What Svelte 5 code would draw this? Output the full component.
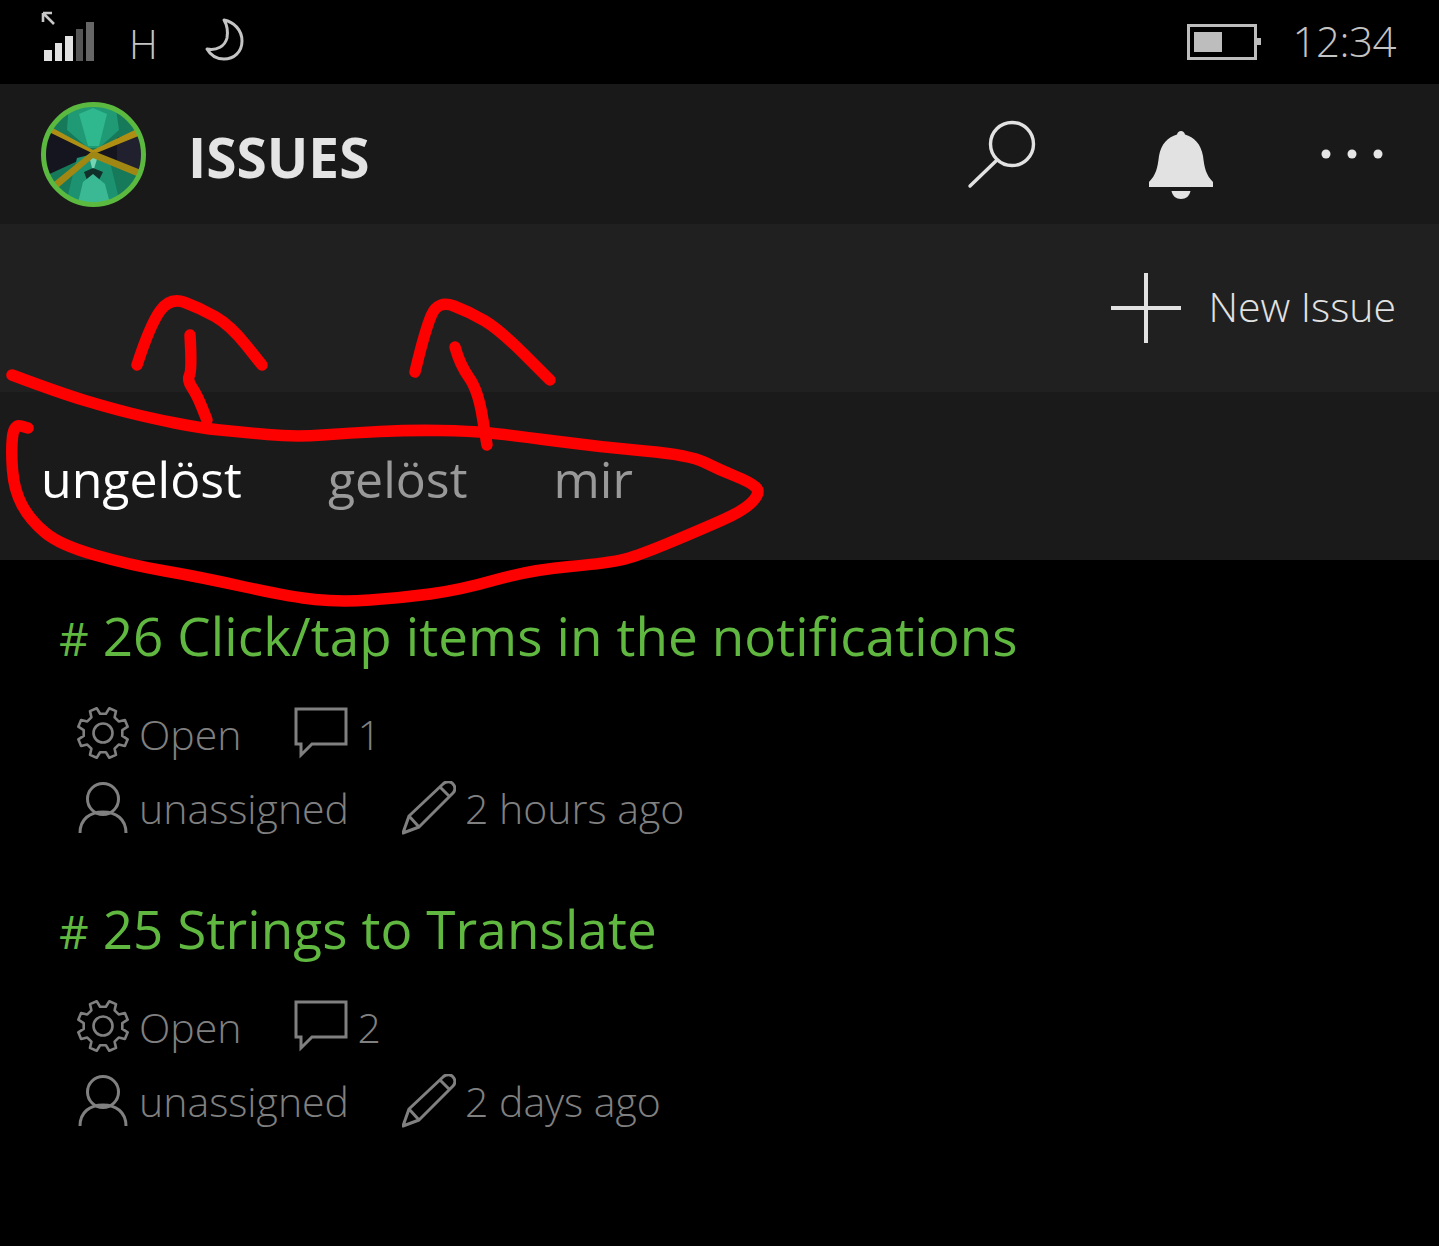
<script>
  const smooth = (p) => {
    let d = `M${p[0][0]} ${p[0][1]}`;
    for (let i = 1; i < p.length - 1; i++) {
      const mx = (p[i][0] + p[i + 1][0]) / 2, my = (p[i][1] + p[i + 1][1]) / 2;
      d += ` Q${p[i][0]} ${p[i][1]} ${mx} ${my}`;
    }
    const l = p[p.length - 1];
    return d + ` L${l[0]} ${l[1]}`;
  };
  const strokes = [
    [[12,375],[60,393],[110,408],[150,418],[200,428],[240,432],[295,437],[350,433],[410,430],[470,431],[510,435],[600,447],[690,455],[720,470],[750,482],[761,492],[745,510],[700,530],[640,555],[610,563],[530,570],[460,590],[400,598],[340,602],[290,597],[200,577],[130,565],[60,545],[30,520],[14,490],[11,450],[14,424],[28,428]],
    [[137,365],[150,325],[170,297],[200,308],[230,325],[262,365]],
    [[190,335],[192,370],[187,380],[197,395],[207,420]],
    [[415,372],[425,330],[438,300],[470,312],[500,330],[550,380]],
    [[455,347],[460,365],[478,390],[487,445]]
  ].map(smooth);

  const gear = (() => {
    const n = 8, c = 27, ro = 25.5, ri = 19.5;
    let d = '';
    for (let i = 0; i < n; i++) {
      const a = (i / n) * Math.PI * 2 + Math.PI / 8;
      const w = Math.PI / n;
      const pts = [[ri, a - w * 0.62], [ro, a - w * 0.36], [ro, a + w * 0.36], [ri, a + w * 0.62]];
      pts.forEach(([r, t], k) => {
        d += `${i === 0 && k === 0 ? 'M' : 'L'}${(c + r * Math.cos(t)).toFixed(1)} ${(c + r * Math.sin(t)).toFixed(1)}`;
      });
    }
    return d + 'Z';
  })();

  const issues = [
    { title: '26 Click/tap items in the notifications', comments: 1, time: '2 hours ago' },
    { title: '25 Strings to Translate', comments: 2, time: '2 days ago' }
  ];
</script>

<div class="page">
  <div class="status">
    <svg class="signal" width="58" height="52" viewBox="0 0 58 52">
      <path d="M5 3h9M5 3v9M5 3l11 11" fill="none" stroke="#c8c8c8" stroke-width="2.6"/>
      <rect x="6" y="40" width="8" height="11" fill="#e2e2e2"/>
      <rect x="17" y="33" width="7" height="18" fill="#e2e2e2"/>
      <rect x="27" y="26" width="8" height="25" fill="#e2e2e2"/>
      <rect x="38" y="19" width="7" height="32" fill="#555"/>
      <rect x="48" y="12" width="8" height="39" fill="#666"/>
    </svg>
    <span class="net">H</span>
    <svg class="moon" width="42" height="44" viewBox="0 0 42 44">
      <path d="M20 2C30 4 38 12 38 23C38 34 30 41 20 41C13 41 7 38 3 31C13 33 21 28 23 20C24 14 23 7 20 2Z" fill="none" stroke="#c4c4c4" stroke-width="3" stroke-linejoin="round"/>
    </svg>
    <span class="spacer"></span>
    <svg class="battery" width="75" height="36" viewBox="0 0 75 36">
      <rect x="1.5" y="1.5" width="67" height="33" fill="none" stroke="#bdbdbd" stroke-width="3"/>
      <rect x="7" y="8" width="28" height="20" fill="#bdbdbd"/>
      <rect x="70" y="14" width="4" height="7" fill="#bdbdbd"/>
    </svg>
    <span class="time">12:34</span>
  </div>

  <header class="bar">
    <svg class="avatar" width="105" height="105" viewBox="0 0 105 105">
      <defs><clipPath id="av"><circle cx="52.5" cy="52.5" r="50"/></clipPath></defs>
      <g clip-path="url(#av)">
        <rect width="105" height="105" fill="#167a5a"/>
        <path d="M0 24L52 50L105 24V76L52 52L0 76Z" fill="#15151f"/>
        <path d="M76 36L105 28V70L76 60Z" fill="#20202e"/>
        <path d="M28 0H74L78 28L58 46H47L26 28Z" fill="#1f9a74"/>
        <path d="M38 12L52 6L66 12L58 44H47Z" fill="#2fb78e"/>
        <path d="M36 56L52 52L68 56L80 105H24Z" fill="#1c9270"/>
        <path d="M48 54L52 70L57 54Z" fill="#74d4b4"/>
        <path d="M43 70L52 66L62 70L58 78H46Z" fill="#12302a"/>
        <path d="M42 80L52 72L64 82L70 105H36Z" fill="#3bb995"/>
        <path d="M8 24L52 48L98 26L100 33L53 52L10 31Z" fill="#ae8f14"/>
        <path d="M8 84L50 50L55 50L100 68L98 75L52 56L12 90Z" fill="#a08612"/>
      </g>
      <circle cx="52.5" cy="52.5" r="50" fill="none" stroke="#5cb940" stroke-width="5"/>
    </svg>
    <h1>ISSUES</h1>
    <span class="spacer"></span>
    <svg class="search" width="70" height="70" viewBox="0 0 70 70">
      <circle cx="46" cy="25" r="21.5" fill="none" stroke="#e2e2e2" stroke-width="3.4"/>
      <path d="M31 41L4 67" stroke="#e2e2e2" stroke-width="3.4" stroke-linecap="round"/>
    </svg>
    <svg class="bell" width="66" height="72" viewBox="0 0 66 72">
      <path d="M33 2C35 2 36.500 3.500 37 5.500C46 8 53 15 55 27C56.500 39 58 46 65 53V58H1V53C8 46 9.500 39 11 27C13 15 20 8 29 5.500C29.500 3.500 31 2 33 2Z" fill="#e2e2e2"/>
      <path d="M23.500 62H42.500C41.500 67 38 70 33 70C28 70 24.500 67 23.500 62Z" fill="#e2e2e2"/>
    </svg>
    <svg class="more" width="67" height="12" viewBox="0 0 67 12">
      <circle cx="6" cy="6" r="4.500" fill="#e6e6e6"/>
      <circle cx="32" cy="6" r="4.500" fill="#e6e6e6"/>
      <circle cx="58" cy="6" r="4.500" fill="#e6e6e6"/>
    </svg>
  </header>

  <div class="actions">
    <svg width="70" height="70" viewBox="0 0 70 70">
      <path d="M35 0V70M0 35H70" stroke="#e2e2e2" stroke-width="4"/>
    </svg>
    <span class="action-label">New Issue</span>
  </div>

  <nav class="tabs">
    <span class="tab active">ungelöst</span>
    <span class="tab">gelöst</span>
    <span class="tab">mir</span>
  </nav>

  <main class="list">
    {#each issues as issue}
      <article class="issue">
        <h2><span class="hash">#</span> {issue.title}</h2>
        <div class="row first">
          <span class="item">
            <svg width="54" height="54" viewBox="0 0 54 54" fill="none" stroke="#808080" stroke-width="2.600">
              <path d={gear} stroke-linejoin="round"/>
              <circle cx="27" cy="27" r="9.500"/>
            </svg>
            <span class="val">Open</span>
          </span>
          <span class="item">
            <svg width="54" height="54" viewBox="0 0 54 54" fill="none" stroke="#808080" stroke-width="3">
              <path d="M2 3H52V38H18L7 49V38H2Z"/>
            </svg>
            <span class="val">{issue.comments}</span>
          </span>
        </div>
        <div class="row">
          <span class="item">
            <svg width="54" height="54" viewBox="0 0 54 54" fill="none" stroke="#808080" stroke-width="3">
              <circle cx="27" cy="18" r="15.500"/>
              <path d="M4 52C4 38 14 31 27 31C40 31 50 38 50 52"/>
            </svg>
            <span class="val">unassigned</span>
          </span>
          <span class="item">
            <svg width="54" height="54" viewBox="0 0 54 54" fill="none" stroke="#808080" stroke-width="3" stroke-linejoin="round">
              <path d="M1 52L7 35L41 3C44 0 49 0 51 3C54 6 53 10 51 12L17 46ZM7 35L17 46M38 6L48 16"/>
            </svg>
            <span class="val">{issue.time}</span>
          </span>
        </div>
      </article>
    {/each}
  </main>

  <svg class="scribble" width="1439" height="1246" viewBox="0 0 1439 1246" fill="none" stroke="#fd0000" stroke-width="11.500" stroke-linecap="round" stroke-linejoin="round">
    {#each strokes as d}
      <path {d}/>
    {/each}
  </svg>
</div>

<style>
  :global(body) {
    margin: 0;
    background: #000;
  }
  .page {
    position: relative;
    width: 1439px;
    height: 1246px;
    overflow: hidden;
    background: #000;
    font-family: "Open Sans", "Noto Sans", sans-serif;
  }
  .spacer {
    flex: 1;
  }
  .status {
    height: 84px;
    display: flex;
    align-items: center;
    padding: 0 43px 0 38px;
    box-sizing: border-box;
    color: #c4c4c4;
    font-weight: 300;
  }
  .signal {
    margin-top: -12px;
  }
  .net {
    font-size: 40px;
    margin-left: 33px;
    line-height: 1;
    margin-top: 4px;
  }
  .moon {
    margin-left: 46px;
    margin-top: -4px;
  }
  .time {
    font-size: 42px;
    letter-spacing: -0.5px;
    margin-left: 31px;
    line-height: 1;
    margin-top: -2px;
  }
  .bar {
    height: 140px;
    display: flex;
    align-items: center;
    background: #191919;
    padding: 0 52px 0 41px;
    box-sizing: border-box;
  }
  .avatar {
    margin-top: 1px;
  }
  h1 {
    margin: 4px 0 0 42px;
    font-size: 55px;
    font-weight: 700;
    color: #e4e4e4;
    line-height: 1;
  }
  .search {
    margin-top: 0;
  }
  .bell {
    margin: 21px 0 0 112px;
  }
  .more {
    margin: 0 0 0 106px;
  }
  .actions {
    height: 168px;
    display: flex;
    align-items: center;
    justify-content: flex-end;
    gap: 27px;
    background: #202020;
    padding-right: 43px;
    box-sizing: border-box;
    color: #e2e2e2;
    font-size: 41px;
    font-weight: 300;
  }
  .action-label {
    margin-top: -4px;
  }
  .tabs {
    height: 168px;
    display: flex;
    align-items: center;
    gap: 86px;
    background: #1a1a1a;
    padding-left: 41px;
    box-sizing: border-box;
    font-size: 50px;
    font-weight: 400;
  }
  .tab {
    color: #999;
    margin-top: 5px;
  }
  .tab.active {
    color: #fff;
  }
  .list {
    padding: 38px 0 0 59px;
  }
  .issue {
    height: 293px;
  }
  h2 {
    margin: 0;
    font-size: 53px;
    font-weight: 400;
    line-height: 76px;
    letter-spacing: 0.1px;
    color: #60b841;
  }
  .hash {
    font-size: 46px;
    line-height: 1;
  }
  .row {
    display: flex;
    gap: 53px;
    padding-left: 17px;
    height: 75px;
    align-items: center;
    color: #808080;
    font-size: 41px;
    font-weight: 300;
  }
  .row.first {
    height: 74px;
    margin-top: 22px;
  }
  .item {
    display: flex;
    align-items: center;
    gap: 9px;
  }
  .val {
    margin-top: 1px;
  }
  .scribble {
    position: absolute;
    left: 0;
    top: 0;
    pointer-events: none;
  }
</style>
